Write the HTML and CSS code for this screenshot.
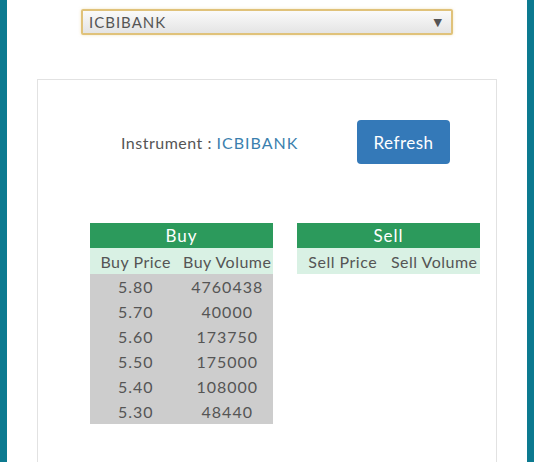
FILE: index.html
```html
<!DOCTYPE html>
<html>
<head>
<meta charset="utf-8">
<link rel="stylesheet" href="styles.css">
</head>
<body>
<div class="frame">
  <div class="page">
    <div class="select">
      <span class="select-text">ICBIBANK</span>
      <span class="select-arrow">&#9660;</span>
    </div>
    <div class="panel">
      <div class="instrument-row">
        <div class="instrument">Instrument : <span class="inst-name">ICBIBANK</span></div>
        <div class="btn">Refresh</div>
      </div>
      <div class="tables">
        <table class="book">
          <tr><th colspan="2" class="head">Buy</th></tr>
          <tr class="sub"><td>Buy Price</td><td>Buy Volume</td></tr>
          <tr class="data"><td>5.80</td><td>4760438</td></tr>
          <tr class="data"><td>5.70</td><td>40000</td></tr>
          <tr class="data"><td>5.60</td><td>173750</td></tr>
          <tr class="data"><td>5.50</td><td>175000</td></tr>
          <tr class="data"><td>5.40</td><td>108000</td></tr>
          <tr class="data"><td>5.30</td><td>48440</td></tr>
        </table>
        <table class="book">
          <tr><th colspan="2" class="head">Sell</th></tr>
          <tr class="sub"><td>Sell Price</td><td>Sell Volume</td></tr>
        </table>
      </div>
    </div>
  </div>
</div>
</body>
</html>
```
FILE: styles.css
```css
html, body {
  margin: 0;
  padding: 0;
  height: 100%;
}
body {
  font-family: "Lato", "DejaVu Sans", sans-serif;
  color: #555;
}
.frame {
  height: 462px;
  background: #0c7a90;
  padding: 0 7px;
  box-sizing: border-box;
  overflow: hidden;
}
.page {
  background: #fff;
  height: 100%;
  display: flex;
  flex-direction: column;
  align-items: center;
  padding-top: 9px;
  box-sizing: border-box;
}
.select {
  width: 372px;
  height: 26px;
  box-sizing: border-box;
  border: 2px solid #e0c27a;
  border-radius: 2px;
  background: linear-gradient(#fafafa, #e4e4e4);
  display: flex;
  align-items: center;
  justify-content: space-between;
  padding: 0 9px 0 6px;
  box-shadow: 0 0 3px rgba(230, 200, 120, 0.5);
}
.select-text {
  font-size: 15px;
  letter-spacing: 1px;
  color: #555;
}
.select-arrow {
  font-size: 11px;
  color: #555;
}
.panel {
  margin-top: 44px;
  width: 460px;
  flex: 1;
  box-sizing: border-box;
  border: 1px solid #e2e2e2;
  border-bottom: none;
  padding: 40px 0 0 52px;
}
.instrument-row {
  display: flex;
  align-items: center;
  padding-left: 31px;
  gap: 59px;
}
.instrument {
  font-size: 16px;
  letter-spacing: 0.5px;
  color: #555;
  width: 177px;
  white-space: nowrap;
}
.inst-name {
  color: #3a7fae;
  letter-spacing: 1px;
}
.btn {
  width: 93px;
  height: 44px;
  background: #3479b8;
  border-radius: 4px;
  color: #fff;
  font-size: 17px;
  letter-spacing: 0.5px;
  display: flex;
  align-items: center;
  justify-content: center;
}
.tables {
  display: flex;
  gap: 24px;
  margin-top: 59px;
  align-items: flex-start;
}
.book {
  border-collapse: collapse;
  width: 183px;
  table-layout: fixed;
}
.book td, .book th {
  padding: 0;
  text-align: center;
  white-space: nowrap;
  font-weight: normal;
}
.book td:first-child {
  width: 87px;
}
.head {
  background: #2c9a5c;
  color: #fff;
  height: 25px;
  font-size: 17px;
  letter-spacing: 1px;
}
.sub td {
  background: #d9f1e4;
  height: 26px;
  font-size: 16px;
  letter-spacing: 0.5px;
  color: #555;
}
.data td {
  background: #cdcdcd;
  height: 25px;
  font-size: 16px;
  letter-spacing: 1px;
  color: #555;
}
```
